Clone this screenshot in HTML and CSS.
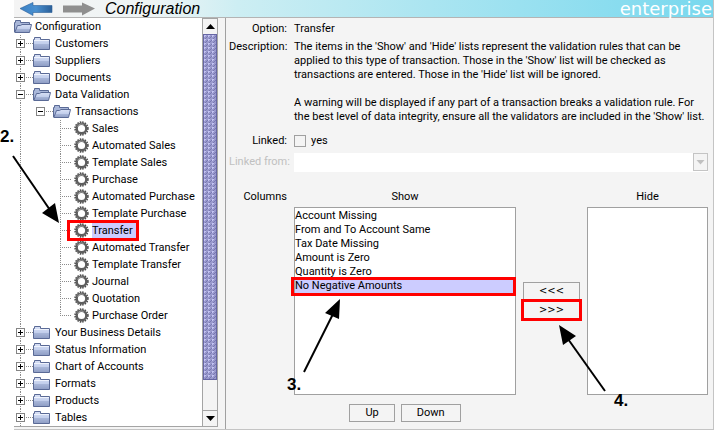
FILE: index.html
```html
<!DOCTYPE html>
<html lang="en">
<head>
<meta charset="utf-8">
<title>Configuration</title>
<link rel="stylesheet" href="styles.css">
</head>
<body>
<svg class="defs" width="0" height="0" aria-hidden="true">
  <defs>
    <linearGradient id="face" x1="0" y1="0" x2="0" y2="1"><stop offset="0" stop-color="#d9e1f6"/><stop offset=".5" stop-color="#c3cfec"/><stop offset=".55" stop-color="#a9b7d9"/><stop offset="1" stop-color="#8e9dc4"/></linearGradient>
    <linearGradient id="blue" x1="0" y1="0" x2="1" y2="0"><stop offset="0" stop-color="#3a80c4"/><stop offset=".5" stop-color="#4a90d0"/><stop offset="1" stop-color="#2a5f98"/></linearGradient>
    <symbol id="folder" viewBox="0 0 18 14"><path d="M.5 12.500V2.500H1.500V.5H7.500V2.500H16.500V12.500Z" fill="url(#face)" stroke="#5a6a96"/><path d="M1 3.500H16" stroke="#eef2fc"/></symbol>
    <symbol id="open" viewBox="0 0 18 14"><path d="M.5 12V2.500H1.500V.5H6.500V2.500H15.500V4" fill="#a9b7d9" stroke="#5a6a96"/><path d="M.8 12.500L3.500 5.500H6.500L8 4.500H17.500L15.500 12.500Z" fill="url(#face)" stroke="#5a6a96"/></symbol>
    <symbol id="gear" viewBox="0 0 15 15"><circle cx="7.500" cy="7.500" r="6.400" fill="none" stroke="#4c4c4c" stroke-width="1.600" stroke-dasharray="1.500 1.010"/><circle cx="7.500" cy="7.500" r="4.800" fill="#fff" stroke="#5e5e5e" stroke-width="2.400"/><path d="M3.500 5.500A4.500 4.500 0 0 1 9.500 3.500" fill="none" stroke="#a2a2a2"/></symbol>
  </defs>
</svg>
<div class="app">
  <header class="bar">
    <button class="nav" aria-label="Back"><svg width="34" height="14" viewBox="0 0 34 14"><path d="M1 6.500L14 .5V3.500H33V10.500H14V13.500Z" fill="url(#blue)" stroke="#2b5f98" stroke-width=".6"/></svg></button>
    <button class="nav" aria-label="Forward"><svg width="34" height="14" viewBox="0 0 34 14"><path d="M33 6.500L20 .5V3.500H1V10.500H20V13.500Z" fill="#8f8f8f"/></svg></button>
    <h1>Configuration</h1>
    <span class="brand">enterprise</span>
  </header>
  <div class="split">
    <nav class="side">
      <ul class="tree" id="tree">
        <li class="row root"><svg class="ico" width="18" height="14"><use href="#open"/></svg><span>Configuration</span></li>
        <li class="row"><button class="tog" aria-label="Expand"></button><svg class="ico" width="18" height="14"><use href="#folder"/></svg><span>Customers</span></li>
        <li class="row"><button class="tog" aria-label="Expand"></button><svg class="ico" width="18" height="14"><use href="#folder"/></svg><span>Suppliers</span></li>
        <li class="row"><button class="tog" aria-label="Expand"></button><svg class="ico" width="18" height="14"><use href="#folder"/></svg><span>Documents</span></li>
        <li class="row"><button class="tog less" aria-label="Collapse"></button><svg class="ico" width="18" height="14"><use href="#open"/></svg><span>Data Validation</span></li>
        <li class="row sub"><button class="tog less" aria-label="Collapse"></button><svg class="ico" width="18" height="14"><use href="#open"/></svg><span>Transactions</span></li>
        <li class="row leaf"><svg class="ico" width="15" height="15"><use href="#gear"/></svg><span>Sales</span></li>
        <li class="row leaf"><svg class="ico" width="15" height="15"><use href="#gear"/></svg><span>Automated Sales</span></li>
        <li class="row leaf"><svg class="ico" width="15" height="15"><use href="#gear"/></svg><span>Template Sales</span></li>
        <li class="row leaf"><svg class="ico" width="15" height="15"><use href="#gear"/></svg><span>Purchase</span></li>
        <li class="row leaf"><svg class="ico" width="15" height="15"><use href="#gear"/></svg><span>Automated Purchase</span></li>
        <li class="row leaf"><svg class="ico" width="15" height="15"><use href="#gear"/></svg><span>Template Purchase</span></li>
        <li class="row leaf picked"><svg class="ico" width="15" height="15"><use href="#gear"/></svg><span>Transfer</span><i class="ring ring-tree"></i></li>
        <li class="row leaf"><svg class="ico" width="15" height="15"><use href="#gear"/></svg><span>Automated Transfer</span></li>
        <li class="row leaf"><svg class="ico" width="15" height="15"><use href="#gear"/></svg><span>Template Transfer</span></li>
        <li class="row leaf"><svg class="ico" width="15" height="15"><use href="#gear"/></svg><span>Journal</span></li>
        <li class="row leaf"><svg class="ico" width="15" height="15"><use href="#gear"/></svg><span>Quotation</span></li>
        <li class="row leaf last"><svg class="ico" width="15" height="15"><use href="#gear"/></svg><span>Purchase Order</span></li>
        <li class="row"><button class="tog" aria-label="Expand"></button><svg class="ico" width="18" height="14"><use href="#folder"/></svg><span>Your Business Details</span></li>
        <li class="row"><button class="tog" aria-label="Expand"></button><svg class="ico" width="18" height="14"><use href="#folder"/></svg><span>Status Information</span></li>
        <li class="row"><button class="tog" aria-label="Expand"></button><svg class="ico" width="18" height="14"><use href="#folder"/></svg><span>Chart of Accounts</span></li>
        <li class="row"><button class="tog" aria-label="Expand"></button><svg class="ico" width="18" height="14"><use href="#folder"/></svg><span>Formats</span></li>
        <li class="row"><button class="tog" aria-label="Expand"></button><svg class="ico" width="18" height="14"><use href="#folder"/></svg><span>Products</span></li>
        <li class="row"><button class="tog" aria-label="Expand"></button><svg class="ico" width="18" height="14"><use href="#folder"/></svg><span>Tables</span></li>
      </ul>
      <div class="scroll">
        <button class="step up" aria-label="Scroll up"><svg width="9" height="5" viewBox="0 0 9 5"><path d="M0 5L4.500 0L9 5Z"/></svg></button>
        <div class="track"><div class="thumb"></div></div>
        <button class="step down" aria-label="Scroll down"><svg width="9" height="5" viewBox="0 0 9 5"><path d="M0 0L4.500 5L9 0Z"/></svg></button>
      </div>
    </nav>
    <main class="detail">
      <span class="lab">Option:</span><span>Transfer</span>
      <span class="lab desc">Description:</span>
      <div class="desc">
        <p>The items in the 'Show' and 'Hide' lists represent the validation rules that can be<br>applied to this type of transaction. Those in the 'Show' list will be checked as<br>transactions are entered. Those in the 'Hide' list will be ignored.</p>
        <p>A warning will be displayed if any part of a transaction breaks a validation rule. For<br>the best level of data integrity, ensure all the validators are included in the 'Show' list.</p>
      </div>
      <label class="lab linked" for="linked">Linked:</label>
      <div class="linked check"><input type="checkbox" id="linked"><label for="linked">yes</label></div>
      <label class="lab off" for="from">Linked from:</label>
      <div class="combo"><select id="from" disabled><option></option></select><svg class="caret" width="15" height="18" viewBox="0 0 15 18"><rect x=".5" y=".5" width="14" height="17" fill="#f4f4f4" stroke="#c4c4c4"/><path d="M3.500 7H11.500L7.500 11.500Z" fill="#c0c0c0"/></svg></div>
      <span class="lab cols">Columns</span>
      <div class="cols lists">
        <div class="pane show">
          <h2 id="show-title">Show</h2>
          <ul class="list" aria-labelledby="show-title">
            <li>Account Missing</li>
            <li>From and To Account Same</li>
            <li>Tax Date Missing</li>
            <li>Amount is Zero</li>
            <li>Quantity is Zero</li>
            <li class="chosen">No Negative Amounts<i class="ring ring-list"></i></li>
          </ul>
          <div class="order"><button class="btn">Up</button><button class="btn">Down</button></div>
        </div>
        <div class="move">
          <button class="btn">&lt;&lt;&lt;</button>
          <button class="btn">&gt;&gt;&gt;<i class="ring ring-btn"></i></button>
        </div>
        <div class="pane hide">
          <h2 id="hide-title">Hide</h2>
          <ul class="list" aria-labelledby="hide-title"></ul>
        </div>
      </div>
    </main>
  </div>
</div>
<div class="notes">
  <span class="note n2">2.</span><span class="note n3">3.</span><span class="note n4">4.</span>
  <svg width="714" height="430" viewBox="0 0 714 430"><g stroke="#000" stroke-width="2"><path d="M13 156L50 210"/><path d="M304 372L333 314"/><path d="M605 391L568 339"/></g><path d="M59 223L42 213L55 203ZM340 299L325 313L339 319ZM559 325L563 345L576 336Z"/></svg>
</div>
</body>
</html>
```
FILE: styles.css
```css
* { box-sizing: border-box; }
body { margin: 0; min-height: 100vh; display: flex; background: #fff; color: #000; font: 11px/14px Roboto, sans-serif; }
ul, h1, h2, p { margin: 0; padding: 0; font-size: inherit; font-weight: normal; list-style: none; }
button { margin: 0; padding: 0; border: 0; background: none; color: inherit; font: inherit; }
svg { display: block; flex: none; }
.defs { position: absolute; }

.app { flex: 1; min-width: 0; display: flex; flex-direction: column; margin-left: 14px; border: solid #c4c4c4; border-width: 0 1px 1px 0; background: #f4f4f4; }
.bar { height: 18px; display: flex; align-items: center; gap: 9px; padding: 0 1px 0 5px; border-bottom: 1px solid #b4b4b4; background: linear-gradient(90deg, #f4f4f4 0%, #eef4f5 20%, #cdeef3 32%, #78d8ee 100%); }
.bar h1 { font: italic 16px/16px "Liberation Sans", sans-serif; }
.brand { margin-left: auto; color: #fff; font: 18px/16px "DejaVu Sans", sans-serif; }

.split { flex: 1; display: flex; }
.side { flex: 0 0 204px; display: flex; margin: 0 7px 2px 0; border-bottom: 1px solid #a4a4a4; background: #fff; }
.tree { flex: 1; }
.row { position: relative; height: 17px; display: flex; align-items: center; gap: 4px; padding-left: 2px; white-space: nowrap; }
.row.root { padding-left: 1px; gap: 3px; }
.row:not(.root) { background: repeating-linear-gradient(#8c8c8c 0 1px, transparent 1px 2px) 6px 0 / 1px 100% no-repeat; }
.row .ico { margin-left: -1px; }
.tog { position: relative; width: 9px; height: 9px; margin-right: 5px; border: 1px solid #848484; background: linear-gradient(#000, #000) center / 5px 1px no-repeat, linear-gradient(#000, #000) center / 1px 5px no-repeat, #fff; }
.tog.less { background: linear-gradient(#000, #000) center / 5px 1px no-repeat, #fff; }
.tog::after { content: ""; position: absolute; left: 9px; top: 3px; width: 7px; height: 1px; background: repeating-linear-gradient(90deg, #8c8c8c 0 1px, transparent 1px 2px); }
.row.sub { padding-left: 22px; }
.row.leaf { padding-left: 61px; gap: 3px; }
.row.leaf::after { content: ""; position: absolute; left: 46px; top: 0; bottom: 0; width: 12px; background: repeating-linear-gradient(#8c8c8c 0 1px, transparent 1px 2px) 0 0 / 1px 100% no-repeat, repeating-linear-gradient(90deg, #8c8c8c 0 1px, transparent 1px 2px) 0 8px / 100% 1px no-repeat; }
.row.leaf.last::after { bottom: 8px; }
.row.picked span { padding: 1px 3px 1px 0; background: #ccccff; }
.ring { position: absolute; border: 3px solid #f00; pointer-events: none; z-index: 1; }
.ring-tree { left: 53px; top: -2px; width: 72px; height: 21px; }

.scroll { width: 16px; display: flex; flex-direction: column; border: solid #a4a4a4; border-width: 1px 1px 0; }
.step { height: 15px; display: grid; place-items: center; background: #f4f4f4; }
.track { flex: 1; background: #f4f4f4; border-bottom: 1px solid #a4a4a4; }
.thumb { height: 92%; border: 1px solid #6666a4; background: linear-gradient(135deg, #c4c4f4 25%, transparent 25% 50%, #7878b4 50% 70%, transparent 70%) 0 0 / 4px 4px, #9999cc; }

.detail { flex: 1; min-width: 0; display: grid; grid-template-columns: 58px minmax(0, 1fr); align-content: start; column-gap: 7px; padding: 4px 5px 6px 3px; border-left: 1px solid #a0a0a0; }
.lab { text-align: right; white-space: nowrap; }
.desc { margin-top: 4px; white-space: nowrap; }
p + p { margin-top: 14px; }
.linked { margin-top: 10px; }
.check { display: flex; align-items: center; gap: 5px; }
.check input { appearance: none; width: 12px; height: 12px; margin: 0; border: 1px solid #a0a0a0; }
.off, .combo { margin-top: 5px; }
.off { padding-top: 2px; color: #c0c0c0; }
.combo { position: relative; }
.combo select { appearance: none; display: block; width: 100%; height: 19px; border: 0; background: #fff; opacity: 1; }
.caret { position: absolute; right: 0; top: 0; }
.cols { margin-top: 18px; }
.lists { display: flex; }
.pane { display: flex; flex-direction: column; text-align: center; }
.show { flex: 222; }
.hide { flex: 121; }
.list { height: 188px; margin-top: 3px; padding-top: 1px; border: 1px solid #a0a0a0; background: #fff; text-align: left; }
.list li { position: relative; }
.chosen { background: #ccccff; }
.ring-list { inset: -2px -1px -3px -4px; }
.order { display: flex; justify-content: center; gap: 6px; margin-top: 9px; }
.btn { position: relative; height: 18px; padding: 0 15px; border: 1px solid #a0a0a0; line-height: 16px; white-space: nowrap; }
.move { width: 71px; display: flex; flex-direction: column; gap: 1px; padding: 92px 7px 0; }
.move .btn { padding: 0; font-family: "DejaVu Sans Condensed", "DejaVu Sans", sans-serif; }
.ring-btn { inset: -3px; }

.notes { position: absolute; inset: 0; pointer-events: none; }
.note { position: absolute; font: bold 17px/18px "Liberation Sans", sans-serif; }
.n2 { left: 0; top: 128px; }
.n3 { left: 287px; top: 376px; }
.n4 { left: 614px; top: 392px; }
```
